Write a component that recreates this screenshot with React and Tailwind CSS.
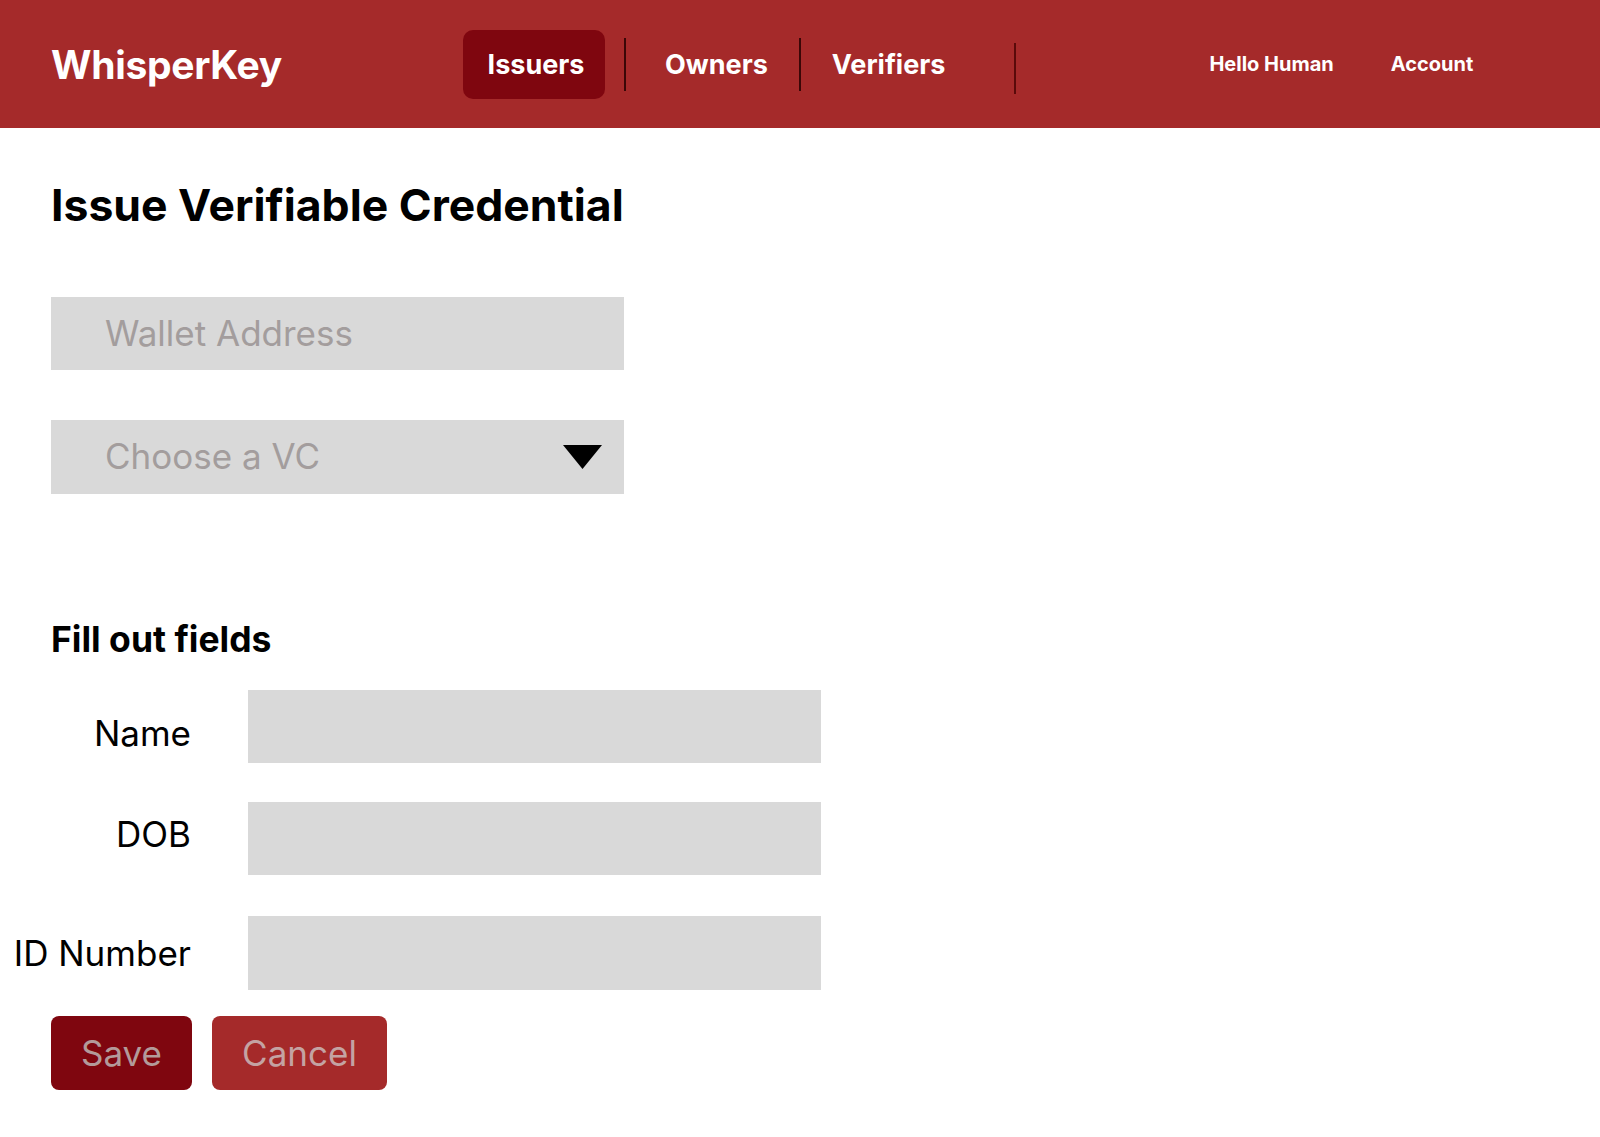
import React from "react";

export default function App() {
  return (
    <div className="min-h-[1137px] w-[1600px] bg-white font-['Inter',sans-serif]">
      <header className="flex h-[128px] items-center bg-[#a52a2a] text-white">
        <div className="ml-[51px] w-[412px] text-[39px] font-bold leading-none tracking-[-0.3px]">WhisperKey</div>
        <nav className="flex items-center">
          <button className="h-[69px] w-[142px] rounded-[10px] bg-[#7f060f] pl-[4px] text-[27px] font-bold leading-none">Issuers</button>
          <span className="ml-[19px] h-[53px] w-[2px] bg-[#3b0707]" />
          <span className="ml-[39px] text-[27px] font-bold leading-none">Owners</span>
          <span className="ml-[31px] h-[53px] w-[2px] bg-[#3b0707]" />
          <span className="ml-[31px] text-[27px] font-bold leading-none">Verifiers</span>
          <span className="ml-[69px] mt-[8px] h-[51px] w-[2px] bg-[#5a0a0a]" />
          <span className="ml-[193px] text-[20px] font-bold leading-none">Hello Human</span>
          <span className="ml-[57px] text-[20px] font-bold leading-none">Account</span>
        </nav>
      </header>

      <main className="flex flex-col pl-[51px]">
        <h1 className="mt-[55px] text-[44.5px] font-bold leading-none text-black">Issue Verifiable Credential</h1>

        <div className="mt-[69px] flex h-[73px] w-[573px] items-center bg-[#d9d9d9] pl-[54px] text-[35px] leading-none text-[#a39d9d]">
          Wallet Address
        </div>

        <div className="mt-[50px] flex h-[74px] w-[573px] items-center justify-between bg-[#d9d9d9] pl-[54px] pr-[22px] text-[35px] leading-none text-[#a39d9d]">
          <span>Choose a VC</span>
          <svg width="39" height="24" viewBox="0 0 39 24">
            <polygon points="0,0 39,0 19.5,24" fill="#000" />
          </svg>
        </div>

        <h2 className="mt-[128px] text-[35.5px] font-bold leading-none text-black">Fill out fields</h2>
      </main>

      <div className="mt-[33px] grid grid-cols-[191px_573px] gap-x-[57px]">
        <div className="flex h-[73px] items-center justify-end pt-[14px] text-[35px] leading-none text-black">Name</div>
        <div className="h-[73px] bg-[#d9d9d9]" />
        <div className="mt-[39px] flex h-[73px] items-center justify-end pb-[8px] text-[35px] leading-none text-black">DOB</div>
        <div className="mt-[39px] h-[73px] bg-[#d9d9d9]" />
        <div className="mt-[41px] flex h-[74px] items-center justify-end text-[35px] leading-none text-black">ID Number</div>
        <div className="mt-[41px] h-[74px] bg-[#d9d9d9]" />
      </div>

      <div className="ml-[51px] mt-[26px] flex gap-[20px]">
        <button className="h-[74px] w-[141px] rounded-[8px] bg-[#7f060f] text-[35px] leading-none text-[#b39a9a]">Save</button>
        <button className="h-[74px] w-[175px] rounded-[8px] bg-[#a52a2a] text-[35px] leading-none text-[#c4a3a3]">Cancel</button>
      </div>
    </div>
  );
}
